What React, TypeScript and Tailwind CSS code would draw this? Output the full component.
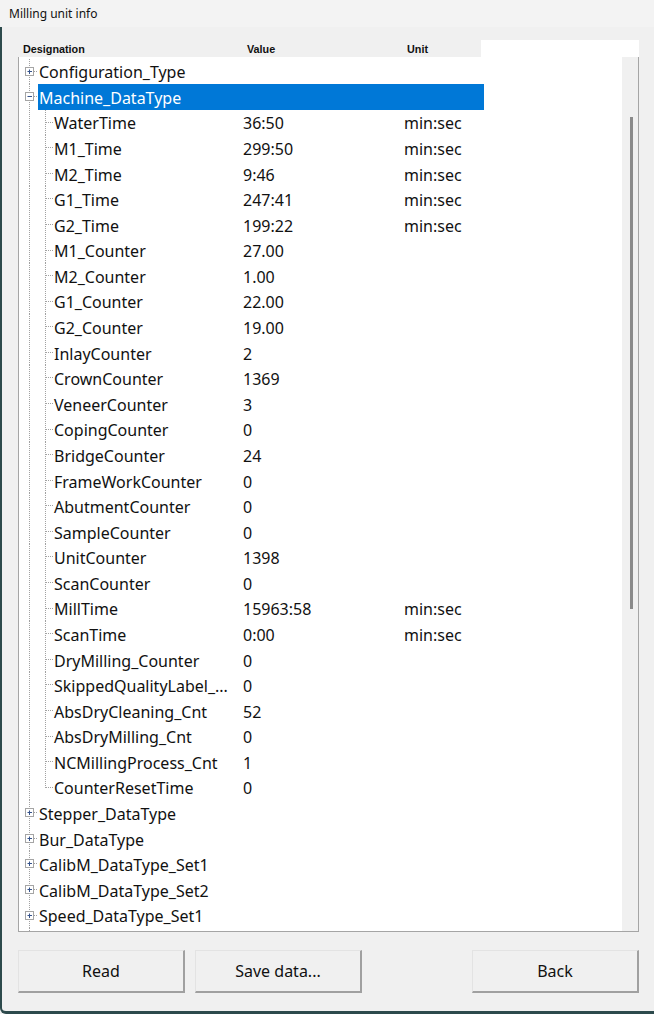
import React from "react";

type Child = { name: string; value: string; unit?: string };

const children: Child[] = [
  { name: "WaterTime", value: "36:50", unit: "min:sec" },
  { name: "M1_Time", value: "299:50", unit: "min:sec" },
  { name: "M2_Time", value: "9:46", unit: "min:sec" },
  { name: "G1_Time", value: "247:41", unit: "min:sec" },
  { name: "G2_Time", value: "199:22", unit: "min:sec" },
  { name: "M1_Counter", value: "27.00" },
  { name: "M2_Counter", value: "1.00" },
  { name: "G1_Counter", value: "22.00" },
  { name: "G2_Counter", value: "19.00" },
  { name: "InlayCounter", value: "2" },
  { name: "CrownCounter", value: "1369" },
  { name: "VeneerCounter", value: "3" },
  { name: "CopingCounter", value: "0" },
  { name: "BridgeCounter", value: "24" },
  { name: "FrameWorkCounter", value: "0" },
  { name: "AbutmentCounter", value: "0" },
  { name: "SampleCounter", value: "0" },
  { name: "UnitCounter", value: "1398" },
  { name: "ScanCounter", value: "0" },
  { name: "MillTime", value: "15963:58", unit: "min:sec" },
  { name: "ScanTime", value: "0:00", unit: "min:sec" },
  { name: "DryMilling_Counter", value: "0" },
  { name: "SkippedQualityLabel_...", value: "0" },
  { name: "AbsDryCleaning_Cnt", value: "52" },
  { name: "AbsDryMilling_Cnt", value: "0" },
  { name: "NCMillingProcess_Cnt", value: "1" },
  { name: "CounterResetTime", value: "0" },
];

const after = [
  "Stepper_DataType",
  "Bur_DataType",
  "CalibM_DataType_Set1",
  "CalibM_DataType_Set2",
  "Speed_DataType_Set1",
];

const ROW = "h-[25.58px]";
const DOT = "#a0a0a0";

function ExpandBox({ open }: { open: boolean }) {
  return (
    <svg width="19" height="25.58" viewBox="0 0 19 25.58" className="shrink-0 block">
      <line x1="10.5" y1="0" x2="10.5" y2="25.58" stroke={DOT} strokeDasharray="1 1" />
      <line x1="15" y1="12.5" x2="19" y2="12.5" stroke={DOT} strokeDasharray="1 1" />
      <rect x="6.5" y="8.5" width="8" height="8" fill="#fff" stroke="#a5a5a5" />
      <line x1="8.5" y1="12.5" x2="13" y2="12.5" stroke="#33508a" />
      {!open && <line x1="10.5" y1="10.5" x2="10.5" y2="15" stroke="#33508a" />}
    </svg>
  );
}

function ChildGutter({ last }: { last: boolean }) {
  return (
    <svg width="35" height="25.58" viewBox="0 0 35 25.58" className="shrink-0 block">
      <line x1="10.5" y1="0" x2="10.5" y2="25.58" stroke={DOT} strokeDasharray="1 1" />
      <line x1="26.5" y1="0" x2="26.5" y2={last ? 13 : 25.58} stroke={DOT} strokeDasharray="1 1" />
      <line x1="27" y1="12.5" x2="34" y2="12.5" stroke={DOT} strokeDasharray="1 1" />
    </svg>
  );
}

function TopRow({ label, open, selected }: { label: string; open: boolean; selected?: boolean }) {
  return (
    <div className={`flex items-center ${ROW}`}>
      <ExpandBox open={open} />
      <div
        className={`${ROW} w-[446px] flex items-center pl-px pt-[2px] leading-[20px] whitespace-nowrap ${
          selected ? "bg-[#0078d7] text-white" : "text-[#111]"
        }`}
      >
        {label}
      </div>
    </div>
  );
}

export default function App() {
  return (
    <div
      className="w-[654px] h-[1014px] bg-[#f0f0f0] flex flex-col overflow-hidden relative"
      style={{ fontFamily: '"Noto Sans", "Open Sans", sans-serif' }}
    >
      {/* Title bar */}
      <div className="h-[27px] bg-[#f3f3f3] flex items-center pl-[9px] text-[12px] text-[#111] shrink-0">
        Milling unit info
      </div>

      <div className="flex-1 flex border-l-2 border-[#2d4a4c] border-b-[3px] rounded-bl-[6px]">
        <div className="flex-1 flex flex-col pl-4 pr-[14px]">
          {/* list header */}
          <div className="mt-[13px] h-[17px] flex w-[621px] shrink-0">
            <div
              className="w-[463px] flex items-center text-[10.8px] font-bold text-[#111] pl-[5px] pt-px"
              style={{ fontFamily: '"Liberation Sans", Arial, sans-serif' }}
            >
              <span className="w-[224px]">Designation</span>
              <span className="w-[160px]">Value</span>
              <span>Unit</span>
            </div>
            <div className="w-[158px] bg-white" />
          </div>

          {/* tree box */}
          <div className="h-[875px] w-[621px] flex bg-white border-l border-b border-r border-[#a5a5a5] text-[16px] shrink-0">
            <div className="flex-1 flex flex-col pt-[1.5px] overflow-hidden">
              <TopRow label="Configuration_Type" open={false} />
              <TopRow label="Machine_DataType" open={true} selected />
              {children.map((c, i) => (
                <div key={c.name} className={`flex items-center ${ROW} text-[#111]`}>
                  <ChildGutter last={i === children.length - 1} />
                  <div className="w-[189px] whitespace-nowrap leading-[20px] pt-[2px]">{c.name}</div>
                  <div className="w-[161px] leading-[20px] pt-[2px]">{c.value}</div>
                  <div className="leading-[20px] pt-[2px]">{c.unit ?? ""}</div>
                </div>
              ))}
              {after.map((a) => (
                <TopRow key={a} label={a} open={false} />
              ))}
              <div className="flex-1 flex">
                <svg width="19" height="40" className="block">
                  <line x1="10.5" y1="0" x2="10.5" y2="40" stroke={DOT} strokeDasharray="1 1" />
                </svg>
              </div>
            </div>
            {/* scrollbar */}
            <div className="w-[16px] bg-[#f0f0f0] flex justify-center pt-[60px] shrink-0">
              <div className="w-[3px] h-[492px] bg-[#8a8a8a] ml-[2px]" />
            </div>
          </div>

          {/* buttons */}
          <div className="mt-[18px] flex w-[621px] shrink-0">
            <Btn label="Read" />
            <div className="w-[10px]" />
            <Btn label="Save data..." />
            <div className="flex-1" />
            <Btn label="Back" />
          </div>
        </div>
      </div>
    </div>
  );
}

function Btn({ label }: { label: string }) {
  return (
    <div className="w-[167px] h-[43px] bg-[#f0f0f0] border-t border-l border-[#e3e3e3] border-r-2 border-b-2 border-r-[#a0a0a0] border-b-[#a0a0a0] flex items-center justify-center text-[16px] text-[#111]">
      {label}
    </div>
  );
}
